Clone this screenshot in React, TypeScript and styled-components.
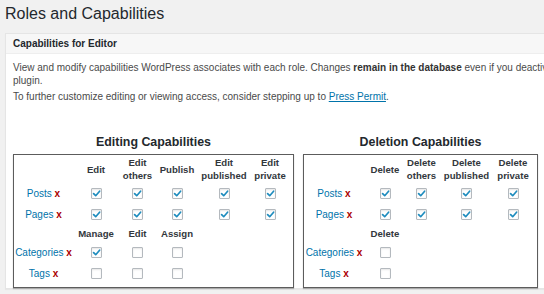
import styled, { createGlobalStyle } from 'styled-components';

type TItem = { label: string; checks: boolean[] };
type TGroup = { heads: string[]; items: TItem[] };
type TSection = {
  title: string;
  width: number;
  columns: number[];
  rows: number[];
  groups: TGroup[];
};

const all = (n: number) => Array.from({ length: n }, () => true);

const sections: TSection[] = [
  {
    title: 'Editing Capabilities',
    width: 281,
    columns: [59, 46, 37, 42, 52, 40],
    rows: [28, 21, 20, 19, 19, 22],
    groups: [
      {
        heads: ['Edit', 'Edit\nothers', 'Publish', 'Edit\npublished', 'Edit\nprivate'],
        items: [
          { label: 'Posts', checks: all(5) },
          { label: 'Pages', checks: all(5) },
        ],
      },
      {
        heads: ['Manage', 'Edit', 'Assign'],
        items: [
          { label: 'Categories', checks: [true, false, false] },
          { label: 'Tags', checks: [false, false, false] },
        ],
      },
    ],
  },
  {
    title: 'Deletion Capabilities',
    width: 235,
    columns: [60, 42, 31, 59, 34],
    rows: [28, 21, 20, 19, 19, 22],
    groups: [
      {
        heads: ['Delete', 'Delete\nothers', 'Delete\npublished', 'Delete\nprivate'],
        items: [
          { label: 'Posts', checks: all(4) },
          { label: 'Pages', checks: all(4) },
        ],
      },
      {
        heads: ['Delete'],
        items: [
          { label: 'Categories', checks: [false] },
          { label: 'Tags', checks: [false] },
        ],
      },
    ],
  },
];

const Checkbox = ({ checked }: { checked: boolean }) => (
  <Box>
    {checked && (
      <svg width="9" height="9" viewBox="0 0 9 9">
        <path
          d="M1.6 4.6 L3.7 6.7 L7.6 2.2"
          fill="none"
          stroke="#1e8cbe"
          strokeWidth="1.7"
          strokeLinecap="round"
          strokeLinejoin="round"
        />
      </svg>
    )}
  </Box>
);

const CapTable = ({ section }: { section: TSection }) => {
  const cols = section.columns.length;
  return (
    <Section>
      <SectionTitle>{section.title}</SectionTitle>
      <Grid
        $width={section.width}
        $columns={section.columns.map(c => `${c}px`).join(' ')}
        $rows={section.rows.map(r => `${r}px`).join(' ')}
      >
        {section.groups.map((group, gi) => [
          <Cell key={`g${gi}-e`} />,
          ...group.heads.map((h, hi) => <Head key={`g${gi}-h${hi}`}>{h}</Head>),
          ...Array.from({ length: cols - 1 - group.heads.length }, (_, i) => (
            <Cell key={`g${gi}-f${i}`} />
          )),
          ...group.items.flatMap(item => [
            <Label key={`${item.label}-l`}>
              <a href="#">{item.label}</a> <Remove>x</Remove>
            </Label>,
            ...item.checks.map((c, ci) => (
              <Cell key={`${item.label}-c${ci}`}>
                <Checkbox checked={c} />
              </Cell>
            )),
            ...Array.from({ length: cols - 1 - item.checks.length }, (_, i) => (
              <Cell key={`${item.label}-f${i}`} />
            )),
          ]),
        ])}
      </Grid>
    </Section>
  );
};

export default function App() {
  return (
    <Page>
      <GlobalStyle />
      <Title>Roles and Capabilities</Title>
      <Panel>
        <PanelHeader>Capabilities for Editor</PanelHeader>
        <PanelBody>
          <Para>
            View and modify capabilities WordPress associates with each role. Changes{' '}
            <strong>remain in the database</strong> even if you deactivate this
            <br />
            plugin.
          </Para>
          <Para>
            To further customize editing or viewing access, consider stepping up to{' '}
            <a href="#">Press Permit</a>.
          </Para>
          <Tables>
            {sections.map(s => (
              <CapTable key={s.title} section={s} />
            ))}
          </Tables>
        </PanelBody>
      </Panel>
    </Page>
  );
}

const GlobalStyle = createGlobalStyle`
  html, body {
    margin: 0;
    padding: 0;
  }
  body {
    background: #f1f1f1;
    font-family: "Liberation Sans", Arial, sans-serif;
    color: #444;
  }
`;

const Page = styled.div`
  width: 544px;
  height: 294px;
  overflow: hidden;
  padding-left: 5px;
  box-sizing: border-box;
`;

const Title = styled.h1`
  margin: 0;
  padding-top: 3px;
  font-size: 16px;
  line-height: 21px;
  font-weight: 400;
  color: #23282d;
`;

const Panel = styled.div`
  margin-top: 9px;
  width: 640px;
  background: #fff;
  border: 1px solid #e5e5e5;
  box-shadow: 0 1px 1px rgba(0, 0, 0, 0.04);
`;

const PanelHeader = styled.div`
  height: 19px;
  line-height: 19px;
  padding: 0 7px;
  background: #f7f7f7;
  border-bottom: 1px solid #eeeeee;
  font-size: 10px;
  font-weight: 700;
  color: #23282d;
`;

const PanelBody = styled.div`
  padding: 7px 7px 0;
`;

const Para = styled.p`
  margin: 0 0 3px;
  font-size: 10px;
  line-height: 13px;
  color: #4a4a4a;
  white-space: nowrap;

  strong {
    color: #333;
  }
  a {
    color: #0073aa;
  }
`;

const Tables = styled.div`
  display: flex;
  align-items: flex-start;
  gap: 9px;
  margin-top: 31px;
`;

const Section = styled.div`
  display: flex;
  flex-direction: column;
  align-items: center;
  gap: 4px;
`;

const SectionTitle = styled.h2`
  margin: 0;
  font-size: 12.4px;
  line-height: 16px;
  font-weight: 700;
  color: #23282d;
`;

const Grid = styled.div<{ $width: number; $columns: string; $rows: string }>`
  display: grid;
  width: ${({ $width }) => $width}px;
  box-sizing: border-box;
  grid-template-columns: ${({ $columns }) => $columns};
  grid-template-rows: ${({ $rows }) => $rows};
  align-items: center;
  justify-items: center;
  padding-bottom: 3px;
  border: 1px solid #5c5c5c;
  box-shadow: 0 1px 1px rgba(0, 0, 0, 0.25);
`;

const Cell = styled.div`
  display: flex;
  align-items: center;
  justify-content: center;
`;

const Head = styled.div`
  font-size: 9.6px;
  line-height: 13px;
  font-weight: 700;
  color: #32373c;
  text-align: center;
  white-space: pre-line;
`;

const Label = styled.div`
  font-size: 10px;
  line-height: 13px;
  white-space: nowrap;

  a {
    color: #0073aa;
    text-decoration: none;
  }
`;

const Remove = styled.span`
  color: #a00;
  font-weight: 700;
`;

const Box = styled.span`
  display: flex;
  align-items: center;
  justify-content: center;
  width: 11px;
  height: 11px;
  box-sizing: border-box;
  border: 1px solid #b4b9be;
  border-radius: 1px;
  background: #fff;
  box-shadow: inset 0 1px 2px rgba(0, 0, 0, 0.1);
`;
